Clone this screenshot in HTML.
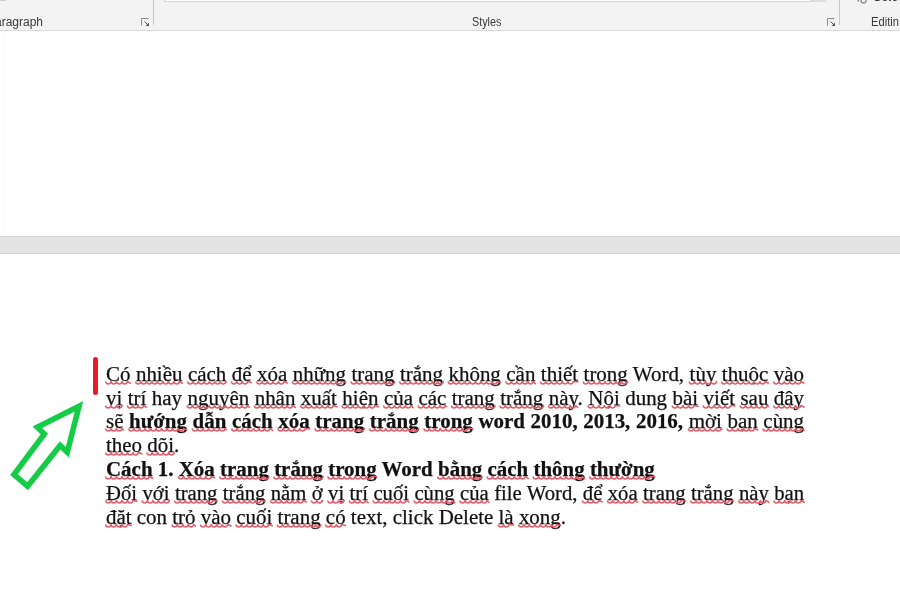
<!DOCTYPE html>
<html><head><meta charset="utf-8">
<style>
html,body{margin:0;padding:0;}
body{width:900px;height:593px;overflow:hidden;background:#fff;position:relative;font-family:"Liberation Sans",sans-serif;}
#ribbon{position:absolute;left:0;top:0;width:900px;height:30px;background:#f3f3f3;border-bottom:1px solid #dadada;}
.sep{position:absolute;top:0;width:1px;height:25px;background:#c8c8c8;}
.lbl{position:absolute;top:15px;font-size:12px;color:#383838;filter:grayscale(1);line-height:14px;white-space:nowrap;}
.gal{position:absolute;left:164px;top:-9px;width:662px;height:11px;border:1px solid #d4d4d4;background:#fcfcfc;box-sizing:border-box;}
.launch{position:absolute;}
.galbtn{position:absolute;left:810px;top:-9px;width:16px;height:11px;background:#dedede;border-left:1px solid #d8d8d8;box-sizing:border-box;}
#band{position:absolute;left:0;top:236px;width:900px;height:16px;background:#e3e3e3;border-top:1px solid #cfcfcf;border-bottom:1px solid #cfcfcf;}
.ln{position:absolute;left:106px;width:666.7px;transform:scaleX(1.047);transform-origin:0 0;font-family:"Liberation Serif",serif;font-size:20px;line-height:24px;color:#111;-webkit-text-stroke:0.25px #111;white-space:nowrap;}
.j{text-align:justify;text-align-last:justify;white-space:normal;}

b{font-weight:bold;}
</style></head><body>
<div id="ribbon">
  <div class="sep" style="left:153px"></div>
  <div class="sep" style="left:839px"></div>
  <div class="gal"></div>
  <div class="galbtn"></div>
  <div class="lbl" style="left:-13px;top:14.5px;">Paragraph</div>
  <div style="position:absolute;left:0;top:0;width:6px;height:1.3px;background:#cccccc"></div>
  <div class="lbl" style="left:472px;top:14.5px;transform:scaleX(0.9);transform-origin:0 0">Styles</div>
  <div class="lbl" style="left:870.5px;top:14.5px;transform:scaleX(0.93);transform-origin:0 0">Editin</div>
  <div class="lbl" style="left:873.5px;top:-9.8px;font-weight:bold;color:#333;">Select</div>
  <svg class="launch" style="left:141px;top:17.5px" width="9" height="9" viewBox="0 0 9 9"><path d="M0.5,7.5V0.5H7.5" fill="none" stroke="#8a8a8a" stroke-width="1"/><path d="M3.5,3.5L6.5,6.5" stroke="#555" stroke-width="1"/><path d="M8,8H4.5L8,4.5Z" fill="#555"/></svg>
  <svg class="launch" style="left:826.5px;top:17.5px" width="9" height="9" viewBox="0 0 9 9"><path d="M0.5,7.5V0.5H7.5" fill="none" stroke="#8a8a8a" stroke-width="1"/><path d="M3.5,3.5L6.5,6.5" stroke="#555" stroke-width="1"/><path d="M8,8H4.5L8,4.5Z" fill="#555"/></svg>
  <svg style="position:absolute;left:855px;top:-6px" width="12" height="11"><path d="M1.5,0.5L3.5,7.5" stroke="#777" stroke-width="1.2" fill="none"/><circle cx="8.5" cy="6.5" r="2.5" fill="none" stroke="#8a8a8a" stroke-width="1.3"/></svg>
</div>
<div style="position:absolute;left:4px;top:31px;width:1px;height:205px;background:#fbfbfb"></div>
<div id="band"></div>
<div id="text" style="filter:grayscale(1) blur(0.3px)">
<div class="ln j" style="top:362px"><span class="w">Có</span> <span class="w">nhiều</span> <span class="w">cách</span> <span class="w">để</span> <span class="w">xóa</span> <span class="w">những</span> <span class="w">trang</span> <span class="w">trắng</span> <span class="w">không</span> <span class="w">cần</span> <span class="w">thiết</span> <span class="w">trong</span> Word, <span class="w">tùy</span> <span class="w">thuộc</span> <span class="w">vào</span></div>
<div class="ln j" style="top:386px"><span class="w">vị</span> <span class="w">trí</span> hay <span class="w">nguyên</span> <span class="w">nhân</span> <span class="w">xuất</span> <span class="w">hiện</span> <span class="w">của</span> <span class="w">các</span> <span class="w">trang</span> <span class="w">trắng</span> <span class="w">này</span>. <span class="w">Nội</span> dung <span class="w">bài</span> <span class="w">viết</span> <span class="w">sau</span> <span class="w">đây</span></div>
<div class="ln j" style="top:409.3px"><span class="w">sẽ</span> <b><span class="w">hướng</span> <span class="w">dẫn</span> <span class="w">cách</span> <span class="w">xóa</span> <span class="w">trang</span> <span class="w">trắng</span> <span class="w">trong</span> word 2010, 2013, 2016,</b> <span class="w">mời</span> <span class="w">bạn</span> <span class="w">cùng</span></div>
<div class="ln" style="top:433.3px"><span class="w">theo</span> <span class="w">dõi</span>.</div>
<div class="ln" style="top:457.3px"><b><span class="w">Cách</span> 1. <span class="w">Xóa</span> <span class="w">trang</span> <span class="w">trắng</span> <span class="w">trong</span> Word <span class="w">bằng</span> <span class="w">cách</span> <span class="w">thông</span> <span class="w">thường</span></b></div>
<div class="ln j" style="top:481.2px;width:674px;transform:scaleX(1.0356)"><span class="w">Đối</span> <span class="w">với</span> <span class="w">trang</span> <span class="w">trắng</span> <span class="w">nằm</span> <span class="w">ở</span> <span class="w">vị</span> <span class="w">trí</span> <span class="w">cuối</span> <span class="w">cùng</span> <span class="w">của</span> file Word, <span class="w">để</span> <span class="w">xóa</span> <span class="w">trang</span> <span class="w">trắng</span> <span class="w">này</span> <span class="w">bạn</span></div>
<div class="ln" style="top:505px"><span class="w">đặt</span> con <span class="w">trỏ</span> <span class="w">vào</span> <span class="w">cuối</span> <span class="w">trang</span> <span class="w">có</span> text, click Delete <span class="w">là</span> <span class="w">xong</span>.</div>
</div>
<div style="position:absolute;left:92.6px;top:357.2px;width:5.5px;height:37.5px;border-radius:2.75px;background:#ea1a2a;"></div>
<svg style="position:absolute;left:0;top:0" width="900" height="593">

<path d="M105.50,381.50C106.30,384.80 110.20,384.80 111.00,381.50C111.80,384.80 115.70,384.80 116.50,381.50C117.30,384.80 121.20,384.80 122.00,381.50C122.80,384.80 126.70,384.80 127.50,381.50L130.94,383.60 M135.42,381.50C136.22,384.80 140.12,384.80 140.92,381.50C141.72,384.80 145.62,384.80 146.42,381.50C147.22,384.80 151.12,384.80 151.92,381.50C152.72,384.80 156.62,384.80 157.42,381.50C158.22,384.80 162.12,384.80 162.92,381.50C163.72,384.80 167.62,384.80 168.42,381.50C169.22,384.80 173.12,384.80 173.92,381.50C174.72,384.80 178.62,384.80 179.42,381.50L182.95,383.51 M187.43,381.50C188.23,384.80 192.13,384.80 192.93,381.50C193.73,384.80 197.63,384.80 198.43,381.50C199.23,384.80 203.13,384.80 203.93,381.50C204.73,384.80 208.63,384.80 209.43,381.50C210.23,384.80 214.13,384.80 214.93,381.50C215.73,384.80 219.63,384.80 220.43,381.50C221.23,384.80 225.13,384.80 225.93,381.50L226.79,382.38 M231.27,381.50C232.07,384.80 235.97,384.80 236.77,381.50C237.57,384.80 241.47,384.80 242.27,381.50C243.07,384.80 246.97,384.80 247.77,381.50L252.05,382.74 M256.53,381.50C257.33,384.80 261.23,384.80 262.03,381.50C262.83,384.80 266.73,384.80 267.53,381.50C268.33,384.80 272.23,384.80 273.03,381.50C273.83,384.80 277.73,384.80 278.53,381.50C279.33,384.80 283.23,384.80 284.03,381.50L287.78,383.28 M292.26,381.50C293.06,384.80 296.96,384.80 297.76,381.50C298.56,384.80 302.46,384.80 303.26,381.50C304.06,384.80 307.96,384.80 308.76,381.50C309.56,384.80 313.46,384.80 314.26,381.50C315.06,384.80 318.96,384.80 319.76,381.50C320.56,384.80 324.46,384.80 325.26,381.50C326.06,384.80 329.96,384.80 330.76,381.50C331.56,384.80 335.46,384.80 336.26,381.50C337.06,384.80 340.96,384.80 341.76,381.50L346.49,382.28 M350.97,381.50C351.77,384.80 355.67,384.80 356.47,381.50C357.27,384.80 361.17,384.80 361.97,381.50C362.77,384.80 366.67,384.80 367.47,381.50C368.27,384.80 372.17,384.80 372.97,381.50C373.77,384.80 377.67,384.80 378.47,381.50C379.27,384.80 383.17,384.80 383.97,381.50C384.77,384.80 388.67,384.80 389.47,381.50C390.27,384.80 394.17,384.80 394.97,381.50L395.00,381.53 M399.48,381.50C400.28,384.80 404.18,384.80 404.98,381.50C405.78,384.80 409.68,384.80 410.48,381.50C411.28,384.80 415.18,384.80 415.98,381.50C416.78,384.80 420.68,384.80 421.48,381.50C422.28,384.80 426.18,384.80 426.98,381.50C427.78,384.80 431.68,384.80 432.48,381.50C433.28,384.80 437.18,384.80 437.98,381.50C438.78,384.80 442.68,384.80 443.48,381.50L443.50,381.53 M447.98,381.50C448.78,384.80 452.68,384.80 453.48,381.50C454.28,384.80 458.18,384.80 458.98,381.50C459.78,384.80 463.68,384.80 464.48,381.50C465.28,384.80 469.18,384.80 469.98,381.50C470.78,384.80 474.68,384.80 475.48,381.50C476.28,384.80 480.18,384.80 480.98,381.50C481.78,384.80 485.68,384.80 486.48,381.50C487.28,384.80 491.18,384.80 491.98,381.50C492.78,384.80 496.68,384.80 497.48,381.50L501.33,383.18 M505.81,381.50C506.61,384.80 510.51,384.80 511.31,381.50C512.11,384.80 516.01,384.80 516.81,381.50C517.61,384.80 521.51,384.80 522.31,381.50C523.11,384.80 527.01,384.80 527.81,381.50C528.61,384.80 532.51,384.80 533.31,381.50L535.88,384.12 M540.36,381.50C541.16,384.80 545.06,384.80 545.86,381.50C546.66,384.80 550.56,384.80 551.36,381.50C552.16,384.80 556.06,384.80 556.86,381.50C557.66,384.80 561.56,384.80 562.36,381.50C563.16,384.80 567.06,384.80 567.86,381.50C568.66,384.80 572.56,384.80 573.36,381.50L578.58,381.79 M583.06,381.50C583.86,384.80 587.76,384.80 588.56,381.50C589.36,384.80 593.26,384.80 594.06,381.50C594.86,384.80 598.76,384.80 599.56,381.50C600.36,384.80 604.26,384.80 605.06,381.50C605.86,384.80 609.76,384.80 610.56,381.50C611.36,384.80 615.26,384.80 616.06,381.50C616.86,384.80 620.76,384.80 621.56,381.50C622.36,384.80 626.26,384.80 627.06,381.50L628.27,382.72 M689.09,381.50C689.89,384.80 693.79,384.80 694.59,381.50C695.39,384.80 699.29,384.80 700.09,381.50C700.89,384.80 704.79,384.80 705.59,381.50C706.39,384.80 710.29,384.80 711.09,381.50C711.89,384.80 715.79,384.80 716.59,381.50L716.85,381.77 M721.33,381.50C722.13,384.80 726.03,384.80 726.83,381.50C727.63,384.80 731.53,384.80 732.33,381.50C733.13,384.80 737.03,384.80 737.83,381.50C738.63,384.80 742.53,384.80 743.33,381.50C744.13,384.80 748.03,384.80 748.83,381.50C749.63,384.80 753.53,384.80 754.33,381.50C755.13,384.80 759.03,384.80 759.83,381.50C760.63,384.80 764.53,384.80 765.33,381.50L768.86,383.51 M773.34,381.50C774.14,384.80 778.04,384.80 778.84,381.50C779.64,384.80 783.54,384.80 784.34,381.50C785.14,384.80 789.04,384.80 789.84,381.50C790.64,384.80 794.54,384.80 795.34,381.50C796.14,384.80 800.04,384.80 800.84,381.50L804.59,383.28 M105.50,405.50C106.30,408.80 110.20,408.80 111.00,405.50C111.80,408.80 115.70,408.80 116.50,405.50C117.30,408.80 121.20,408.80 122.00,405.50L122.79,406.31 M127.26,405.50C128.06,408.80 131.96,408.80 132.76,405.50C133.56,408.80 137.46,408.80 138.26,405.50C139.06,408.80 142.96,408.80 143.76,405.50L146.87,407.93 M187.04,405.50C187.84,408.80 191.74,408.80 192.54,405.50C193.34,408.80 197.24,408.80 198.04,405.50C198.84,408.80 202.74,408.80 203.54,405.50C204.34,408.80 208.24,408.80 209.04,405.50C209.84,408.80 213.74,408.80 214.54,405.50C215.34,408.80 219.24,408.80 220.04,405.50C220.84,408.80 224.74,408.80 225.54,405.50C226.34,408.80 230.24,408.80 231.04,405.50C231.84,408.80 235.74,408.80 236.54,405.50C237.34,408.80 241.24,408.80 242.04,405.50C242.84,408.80 246.74,408.80 247.54,405.50L249.69,407.70 M254.16,405.50C254.96,408.80 258.86,408.80 259.66,405.50C260.46,408.80 264.36,408.80 265.16,405.50C265.96,408.80 269.86,408.80 270.66,405.50C271.46,408.80 275.36,408.80 276.16,405.50C276.96,408.80 280.86,408.80 281.66,405.50C282.46,408.80 286.36,408.80 287.16,405.50C287.96,408.80 291.86,408.80 292.66,405.50L295.88,407.82 M300.34,405.50C301.14,408.80 305.04,408.80 305.84,405.50C306.64,408.80 310.54,408.80 311.34,405.50C312.14,408.80 316.04,408.80 316.84,405.50C317.64,408.80 321.54,408.80 322.34,405.50C323.14,408.80 327.04,408.80 327.84,405.50C328.64,408.80 332.54,408.80 333.34,405.50L337.40,406.97 M341.86,405.50C342.66,408.80 346.56,408.80 347.36,405.50C348.16,408.80 352.06,408.80 352.86,405.50C353.66,408.80 357.56,408.80 358.36,405.50C359.16,408.80 363.06,408.80 363.86,405.50C364.66,408.80 368.56,408.80 369.36,405.50C370.16,408.80 374.06,408.80 374.86,405.50L378.92,406.97 M383.38,405.50C384.18,408.80 388.08,408.80 388.88,405.50C389.68,408.80 393.58,408.80 394.38,405.50C395.18,408.80 399.08,408.80 399.88,405.50C400.68,408.80 404.58,408.80 405.38,405.50C406.18,408.80 410.08,408.80 410.88,405.50L413.45,408.12 M417.92,405.50C418.72,408.80 422.62,408.80 423.42,405.50C424.22,408.80 428.12,408.80 428.92,405.50C429.72,408.80 433.62,408.80 434.42,405.50C435.22,408.80 439.12,408.80 439.92,405.50C440.72,408.80 444.62,408.80 445.42,405.50L446.81,406.92 M451.27,405.50C452.07,408.80 455.97,408.80 456.77,405.50C457.57,408.80 461.47,408.80 462.27,405.50C463.07,408.80 466.97,408.80 467.77,405.50C468.57,408.80 472.47,408.80 473.27,405.50C474.07,408.80 477.97,408.80 478.77,405.50C479.57,408.80 483.47,408.80 484.27,405.50C485.07,408.80 488.97,408.80 489.77,405.50C490.57,408.80 494.47,408.80 495.27,405.50L495.30,405.53 M499.76,405.50C500.56,408.80 504.46,408.80 505.26,405.50C506.06,408.80 509.96,408.80 510.76,405.50C511.56,408.80 515.46,408.80 516.26,405.50C517.06,408.80 520.96,408.80 521.76,405.50C522.56,408.80 526.46,408.80 527.26,405.50C528.06,408.80 531.96,408.80 532.76,405.50C533.56,408.80 537.46,408.80 538.26,405.50C539.06,408.80 542.96,408.80 543.76,405.50L543.79,405.53 M548.25,405.50C549.05,408.80 552.95,408.80 553.75,405.50C554.55,408.80 558.45,408.80 559.25,405.50C560.05,408.80 563.95,408.80 564.75,405.50C565.55,408.80 569.45,408.80 570.25,405.50C571.05,408.80 574.95,408.80 575.75,405.50L578.12,407.92 M587.82,405.50C588.62,408.80 592.52,408.80 593.32,405.50C594.12,408.80 598.02,408.80 598.82,405.50C599.62,408.80 603.52,408.80 604.32,405.50C605.12,408.80 609.02,408.80 609.82,405.50C610.62,408.80 614.52,408.80 615.32,405.50L620.23,406.10 M672.04,405.50C672.84,408.80 676.74,408.80 677.54,405.50C678.34,408.80 682.24,408.80 683.04,405.50C683.84,408.80 687.74,408.80 688.54,405.50C689.34,408.80 693.24,408.80 694.04,405.50L698.63,406.43 M703.09,405.50C703.89,408.80 707.79,408.80 708.59,405.50C709.39,408.80 713.29,408.80 714.09,405.50C714.89,408.80 718.79,408.80 719.59,405.50C720.39,408.80 724.29,408.80 725.09,405.50C725.89,408.80 729.79,408.80 730.59,405.50L735.50,406.10 M739.97,405.50C740.77,408.80 744.67,408.80 745.47,405.50C746.27,408.80 750.17,408.80 750.97,405.50C751.77,408.80 755.67,408.80 756.47,405.50C757.27,408.80 761.17,408.80 761.97,405.50C762.77,408.80 766.67,408.80 767.47,405.50L768.89,406.95 M773.36,405.50C774.16,408.80 778.06,408.80 778.86,405.50C779.66,408.80 783.56,408.80 784.36,405.50C785.16,408.80 789.06,408.80 789.86,405.50C790.66,408.80 794.56,408.80 795.36,405.50C796.16,408.80 800.06,408.80 800.86,405.50L804.60,407.28 M105.50,428.50C106.30,431.80 110.20,431.80 111.00,428.50C111.80,431.80 115.70,431.80 116.50,428.50C117.30,431.80 121.20,431.80 122.00,428.50L123.96,430.49 M128.57,428.50C129.37,431.80 133.27,431.80 134.07,428.50C134.87,431.80 138.77,431.80 139.57,428.50C140.37,431.80 144.27,431.80 145.07,428.50C145.87,431.80 149.77,431.80 150.57,428.50C151.37,431.80 155.27,431.80 156.07,428.50C156.87,431.80 160.77,431.80 161.57,428.50C162.37,431.80 166.27,431.80 167.07,428.50C167.87,431.80 171.77,431.80 172.57,428.50C173.37,431.80 177.27,431.80 178.07,428.50C178.87,431.80 182.77,431.80 183.57,428.50L187.50,430.10 M192.11,428.50C192.91,431.80 196.81,431.80 197.61,428.50C198.41,431.80 202.31,431.80 203.11,428.50C203.91,431.80 207.81,431.80 208.61,428.50C209.41,431.80 213.31,431.80 214.11,428.50C214.91,431.80 218.81,431.80 219.61,428.50C220.41,431.80 224.31,431.80 225.11,428.50L226.87,430.30 M231.48,428.50C232.28,431.80 236.18,431.80 236.98,428.50C237.78,431.80 241.68,431.80 242.48,428.50C243.28,431.80 247.18,431.80 247.98,428.50C248.78,431.80 252.68,431.80 253.48,428.50C254.28,431.80 258.18,431.80 258.98,428.50C259.78,431.80 263.68,431.80 264.48,428.50C265.28,431.80 269.18,431.80 269.98,428.50L273.20,430.82 M277.81,428.50C278.61,431.80 282.51,431.80 283.31,428.50C284.11,431.80 288.01,431.80 288.81,428.50C289.61,431.80 293.51,431.80 294.31,428.50C295.11,431.80 299.01,431.80 299.81,428.50C300.61,431.80 304.51,431.80 305.31,428.50L310.22,429.10 M314.83,428.50C315.63,431.80 319.53,431.80 320.33,428.50C321.13,431.80 325.03,431.80 325.83,428.50C326.63,431.80 330.53,431.80 331.33,428.50C332.13,431.80 336.03,431.80 336.83,428.50C337.63,431.80 341.53,431.80 342.33,428.50C343.13,431.80 347.03,431.80 347.83,428.50C348.63,431.80 352.53,431.80 353.33,428.50C354.13,431.80 358.03,431.80 358.83,428.50C359.63,431.80 363.53,431.80 364.33,428.50L364.70,428.87 M369.31,428.50C370.11,431.80 374.01,431.80 374.81,428.50C375.61,431.80 379.51,431.80 380.31,428.50C381.11,431.80 385.01,431.80 385.81,428.50C386.61,431.80 390.51,431.80 391.31,428.50C392.11,431.80 396.01,431.80 396.81,428.50C397.61,431.80 401.51,431.80 402.31,428.50C403.11,431.80 407.01,431.80 407.81,428.50C408.61,431.80 412.51,431.80 413.31,428.50C414.11,431.80 418.01,431.80 418.81,428.50L419.18,428.87 M423.79,428.50C424.59,431.80 428.49,431.80 429.29,428.50C430.09,431.80 433.99,431.80 434.79,428.50C435.59,431.80 439.49,431.80 440.29,428.50C441.09,431.80 444.99,431.80 445.79,428.50C446.59,431.80 450.49,431.80 451.29,428.50C452.09,431.80 455.99,431.80 456.79,428.50C457.59,431.80 461.49,431.80 462.29,428.50C463.09,431.80 466.99,431.80 467.79,428.50L473.28,428.51 M688.19,428.50C688.99,431.80 692.89,431.80 693.69,428.50C694.49,431.80 698.39,431.80 699.19,428.50C699.99,431.80 703.89,431.80 704.69,428.50C705.49,431.80 709.39,431.80 710.19,428.50C710.99,431.80 714.89,431.80 715.69,428.50C716.49,431.80 720.39,431.80 721.19,428.50L722.38,429.71 M726.99,428.50C727.79,431.80 731.69,431.80 732.49,428.50C733.29,431.80 737.19,431.80 737.99,428.50C738.79,431.80 742.69,431.80 743.49,428.50C744.29,431.80 748.19,431.80 748.99,428.50C749.79,431.80 753.69,431.80 754.49,428.50L758.24,430.28 M762.85,428.50C763.65,431.80 767.55,431.80 768.35,428.50C769.15,431.80 773.05,431.80 773.85,428.50C774.65,431.80 778.55,431.80 779.35,428.50C780.15,431.80 784.05,431.80 784.85,428.50C785.65,431.80 789.55,431.80 790.35,428.50C791.15,431.80 795.05,431.80 795.85,428.50C796.65,431.80 800.55,431.80 801.35,428.50L804.57,430.82 M105.50,452.50C106.30,455.80 110.20,455.80 111.00,452.50C111.80,455.80 115.70,455.80 116.50,452.50C117.30,455.80 121.20,455.80 122.00,452.50C122.80,455.80 126.70,455.80 127.50,452.50C128.30,455.80 132.20,455.80 133.00,452.50C133.80,455.80 137.70,455.80 138.50,452.50L142.56,453.97 M146.79,452.50C147.59,455.80 151.49,455.80 152.29,452.50C153.09,455.80 156.99,455.80 157.79,452.50C158.59,455.80 162.49,455.80 163.29,452.50C164.09,455.80 167.99,455.80 168.79,452.50C169.59,455.80 173.49,455.80 174.29,452.50L174.55,452.77 M105.50,476.50C106.30,479.80 110.20,479.80 111.00,476.50C111.80,479.80 115.70,479.80 116.50,476.50C117.30,479.80 121.20,479.80 122.00,476.50C122.80,479.80 126.70,479.80 127.50,476.50C128.30,479.80 132.20,479.80 133.00,476.50C133.80,479.80 137.70,479.80 138.50,476.50C139.30,479.80 143.20,479.80 144.00,476.50C144.80,479.80 148.70,479.80 149.50,476.50L153.04,478.49 M178.22,476.50C179.02,479.80 182.92,479.80 183.72,476.50C184.52,479.80 188.42,479.80 189.22,476.50C190.02,479.80 193.92,479.80 194.72,476.50C195.52,479.80 199.42,479.80 200.22,476.50C201.02,479.80 204.92,479.80 205.72,476.50C206.52,479.80 210.42,479.80 211.22,476.50L215.29,477.95 M219.52,476.50C220.32,479.80 224.22,479.80 225.02,476.50C225.82,479.80 229.72,479.80 230.52,476.50C231.32,479.80 235.22,479.80 236.02,476.50C236.82,479.80 240.72,479.80 241.52,476.50C242.32,479.80 246.22,479.80 247.02,476.50C247.82,479.80 251.72,479.80 252.52,476.50C253.32,479.80 257.22,479.80 258.02,476.50C258.82,479.80 262.72,479.80 263.52,476.50C264.32,479.80 268.22,479.80 269.02,476.50L269.39,476.87 M273.63,476.50C274.43,479.80 278.33,479.80 279.13,476.50C279.93,479.80 283.83,479.80 284.63,476.50C285.43,479.80 289.33,479.80 290.13,476.50C290.93,479.80 294.83,479.80 295.63,476.50C296.43,479.80 300.33,479.80 301.13,476.50C301.93,479.80 305.83,479.80 306.63,476.50C307.43,479.80 311.33,479.80 312.13,476.50C312.93,479.80 316.83,479.80 317.63,476.50C318.43,479.80 322.33,479.80 323.13,476.50L323.49,476.87 M327.73,476.50C328.53,479.80 332.43,479.80 333.23,476.50C334.03,479.80 337.93,479.80 338.73,476.50C339.53,479.80 343.43,479.80 344.23,476.50C345.03,479.80 348.93,479.80 349.73,476.50C350.53,479.80 354.43,479.80 355.23,476.50C356.03,479.80 359.93,479.80 360.73,476.50C361.53,479.80 365.43,479.80 366.23,476.50C367.03,479.80 370.93,479.80 371.73,476.50L377.21,476.51 M437.51,476.50C438.31,479.80 442.21,479.80 443.01,476.50C443.81,479.80 447.71,479.80 448.51,476.50C449.31,479.80 453.21,479.80 454.01,476.50C454.81,479.80 458.71,479.80 459.51,476.50C460.31,479.80 464.21,479.80 465.01,476.50C465.81,479.80 469.71,479.80 470.51,476.50C471.31,479.80 475.21,479.80 476.01,476.50C476.81,479.80 480.71,479.80 481.51,476.50L482.75,477.76 M486.98,476.50C487.78,479.80 491.68,479.80 492.48,476.50C493.28,479.80 497.18,479.80 497.98,476.50C498.78,479.80 502.68,479.80 503.48,476.50C504.28,479.80 508.18,479.80 508.98,476.50C509.78,479.80 513.68,479.80 514.48,476.50C515.28,479.80 519.18,479.80 519.98,476.50C520.78,479.80 524.68,479.80 525.48,476.50L528.70,478.82 M532.94,476.50C533.74,479.80 537.64,479.80 538.44,476.50C539.24,479.80 543.14,479.80 543.94,476.50C544.74,479.80 548.64,479.80 549.44,476.50C550.24,479.80 554.14,479.80 554.94,476.50C555.74,479.80 559.64,479.80 560.44,476.50C561.24,479.80 565.14,479.80 565.94,476.50C566.74,479.80 570.64,479.80 571.44,476.50C572.24,479.80 576.14,479.80 576.94,476.50C577.74,479.80 581.64,479.80 582.44,476.50L585.14,479.25 M589.38,476.50C590.18,479.80 594.08,479.80 594.88,476.50C595.68,479.80 599.58,479.80 600.38,476.50C601.18,479.80 605.08,479.80 605.88,476.50C606.68,479.80 610.58,479.80 611.38,476.50C612.18,479.80 616.08,479.80 616.88,476.50C617.68,479.80 621.58,479.80 622.38,476.50C623.18,479.80 627.08,479.80 627.88,476.50C628.68,479.80 632.58,479.80 633.38,476.50C634.18,479.80 638.08,479.80 638.88,476.50C639.68,479.80 643.58,479.80 644.38,476.50C645.18,479.80 649.08,479.80 649.88,476.50L655.28,476.60 M105.50,500.50C106.30,503.80 110.20,503.80 111.00,500.50C111.80,503.80 115.70,503.80 116.50,500.50C117.30,503.80 121.20,503.80 122.00,500.50C122.80,503.80 126.70,503.80 127.50,500.50C128.30,503.80 132.20,503.80 133.00,500.50L137.57,501.45 M141.94,500.50C142.74,503.80 146.64,503.80 147.44,500.50C148.24,503.80 152.14,503.80 152.94,500.50C153.74,503.80 157.64,503.80 158.44,500.50C159.24,503.80 163.14,503.80 163.94,500.50C164.74,503.80 168.64,503.80 169.44,500.50L170.01,501.08 M174.38,500.50C175.18,503.80 179.08,503.80 179.88,500.50C180.68,503.80 184.58,503.80 185.38,500.50C186.18,503.80 190.08,503.80 190.88,500.50C191.68,503.80 195.58,503.80 196.38,500.50C197.18,503.80 201.08,503.80 201.88,500.50C202.68,503.80 206.58,503.80 207.38,500.50C208.18,503.80 212.08,503.80 212.88,500.50L217.94,500.95 M222.31,500.50C223.11,503.80 227.01,503.80 227.81,500.50C228.61,503.80 232.51,503.80 233.31,500.50C234.11,503.80 238.01,503.80 238.81,500.50C239.61,503.80 243.51,503.80 244.31,500.50C245.11,503.80 249.01,503.80 249.81,500.50C250.61,503.80 254.51,503.80 255.31,500.50C256.11,503.80 260.01,503.80 260.81,500.50L265.87,500.95 M270.24,500.50C271.04,503.80 274.94,503.80 275.74,500.50C276.54,503.80 280.44,503.80 281.24,500.50C282.04,503.80 285.94,503.80 286.74,500.50C287.54,503.80 291.44,503.80 292.24,500.50C293.04,503.80 296.94,503.80 297.74,500.50C298.54,503.80 302.44,503.80 303.24,500.50L306.90,502.37 M311.28,500.50C312.08,503.80 315.98,503.80 316.78,500.50C317.58,503.80 321.48,503.80 322.28,500.50L323.23,501.47 M327.60,500.50C328.40,503.80 332.30,503.80 333.10,500.50C333.90,503.80 337.80,503.80 338.60,500.50C339.40,503.80 343.30,503.80 344.10,500.50L344.72,501.13 M349.09,500.50C349.89,503.80 353.79,503.80 354.59,500.50C355.39,503.80 359.29,503.80 360.09,500.50C360.89,503.80 364.79,503.80 365.59,500.50L368.51,503.13 M372.88,500.50C373.68,503.80 377.58,503.80 378.38,500.50C379.18,503.80 383.08,503.80 383.88,500.50C384.68,503.80 388.58,503.80 389.38,500.50C390.18,503.80 394.08,503.80 394.88,500.50C395.68,503.80 399.58,503.80 400.38,500.50C401.18,503.80 405.08,503.80 405.88,500.50L409.54,502.37 M413.91,500.50C414.71,503.80 418.61,503.80 419.41,500.50C420.21,503.80 424.11,503.80 424.91,500.50C425.71,503.80 429.61,503.80 430.41,500.50C431.21,503.80 435.11,503.80 435.91,500.50C436.71,503.80 440.61,503.80 441.41,500.50C442.21,503.80 446.11,503.80 446.91,500.50C447.71,503.80 451.61,503.80 452.41,500.50L455.19,503.27 M459.56,500.50C460.36,503.80 464.26,503.80 465.06,500.50C465.86,503.80 469.76,503.80 470.56,500.50C471.36,503.80 475.26,503.80 476.06,500.50C476.86,503.80 480.76,503.80 481.56,500.50C482.36,503.80 486.26,503.80 487.06,500.50L489.32,502.80 M582.31,500.50C583.11,503.80 587.01,503.80 587.81,500.50C588.61,503.80 592.51,503.80 593.31,500.50C594.11,503.80 598.01,503.80 598.81,500.50L602.88,501.96 M607.25,500.50C608.05,503.80 611.95,503.80 612.75,500.50C613.55,503.80 617.45,503.80 618.25,500.50C619.05,503.80 622.95,503.80 623.75,500.50C624.55,503.80 628.45,503.80 629.25,500.50C630.05,503.80 633.95,503.80 634.75,500.50L638.17,502.62 M642.54,500.50C643.34,503.80 647.24,503.80 648.04,500.50C648.84,503.80 652.74,503.80 653.54,500.50C654.34,503.80 658.24,503.80 659.04,500.50C659.84,503.80 663.74,503.80 664.54,500.50C665.34,503.80 669.24,503.80 670.04,500.50C670.84,503.80 674.74,503.80 675.54,500.50C676.34,503.80 680.24,503.80 681.04,500.50L686.10,500.95 M690.47,500.50C691.27,503.80 695.17,503.80 695.97,500.50C696.77,503.80 700.67,503.80 701.47,500.50C702.27,503.80 706.17,503.80 706.97,500.50C707.77,503.80 711.67,503.80 712.47,500.50C713.27,503.80 717.17,503.80 717.97,500.50C718.77,503.80 722.67,503.80 723.47,500.50C724.27,503.80 728.17,503.80 728.97,500.50L734.03,500.95 M738.40,500.50C739.20,503.80 743.10,503.80 743.90,500.50C744.70,503.80 748.60,503.80 749.40,500.50C750.20,503.80 754.10,503.80 754.90,500.50C755.70,503.80 759.60,503.80 760.40,500.50C761.20,503.80 765.10,503.80 765.90,500.50L769.32,502.62 M773.69,500.50C774.49,503.80 778.39,503.80 779.19,500.50C779.99,503.80 783.89,503.80 784.69,500.50C785.49,503.80 789.39,503.80 790.19,500.50C790.99,503.80 794.89,503.80 795.69,500.50C796.49,503.80 800.39,503.80 801.19,500.50L804.61,502.62 M105.50,524.50C106.30,527.80 110.20,527.80 111.00,524.50C111.80,527.80 115.70,527.80 116.50,524.50C117.30,527.80 121.20,527.80 122.00,524.50C122.80,527.80 126.70,527.80 127.50,524.50L132.09,525.43 M171.80,524.50C172.60,527.80 176.50,527.80 177.30,524.50C178.10,527.80 182.00,527.80 182.80,524.50C183.60,527.80 187.50,527.80 188.30,524.50C189.10,527.80 193.00,527.80 193.80,524.50L196.07,526.80 M200.30,524.50C201.10,527.80 205.00,527.80 205.80,524.50C206.60,527.80 210.50,527.80 211.30,524.50C212.10,527.80 216.00,527.80 216.80,524.50C217.60,527.80 221.50,527.80 222.30,524.50C223.10,527.80 227.00,527.80 227.80,524.50L231.55,526.28 M235.79,524.50C236.59,527.80 240.49,527.80 241.29,524.50C242.09,527.80 245.99,527.80 246.79,524.50C247.59,527.80 251.49,527.80 252.29,524.50C253.09,527.80 256.99,527.80 257.79,524.50C258.59,527.80 262.49,527.80 263.29,524.50C264.09,527.80 267.99,527.80 268.79,524.50L272.84,525.97 M277.08,524.50C277.88,527.80 281.78,527.80 282.58,524.50C283.38,527.80 287.28,527.80 288.08,524.50C288.88,527.80 292.78,527.80 293.58,524.50C294.38,527.80 298.28,527.80 299.08,524.50C299.88,527.80 303.78,527.80 304.58,524.50C305.38,527.80 309.28,527.80 310.08,524.50C310.88,527.80 314.78,527.80 315.58,524.50C316.38,527.80 320.28,527.80 321.08,524.50L321.10,524.53 M325.34,524.50C326.14,527.80 330.04,527.80 330.84,524.50C331.64,527.80 335.54,527.80 336.34,524.50C337.14,527.80 341.04,527.80 341.84,524.50L346.12,525.74 M498.03,524.50C498.83,527.80 502.73,527.80 503.53,524.50C504.33,527.80 508.23,527.80 509.03,524.50L514.14,524.89 M518.38,524.50C519.18,527.80 523.08,527.80 523.88,524.50C524.68,527.80 528.58,527.80 529.38,524.50C530.18,527.80 534.08,527.80 534.88,524.50C535.68,527.80 539.58,527.80 540.38,524.50C541.18,527.80 545.08,527.80 545.88,524.50C546.68,527.80 550.58,527.80 551.38,524.50C552.18,527.80 556.08,527.80 556.88,524.50L561.26,525.64" fill="none" stroke="#e65b67" stroke-width="1.5" stroke-linejoin="round"/>
<polygon points="79,406.2 37.3,427.3 44.3,434 14,474.5 27.6,486.2 60.1,445.4 67.3,452.2" fill="none" stroke="#14cc46" stroke-width="5.6" stroke-linejoin="miter"/>
</svg>
</body></html>
